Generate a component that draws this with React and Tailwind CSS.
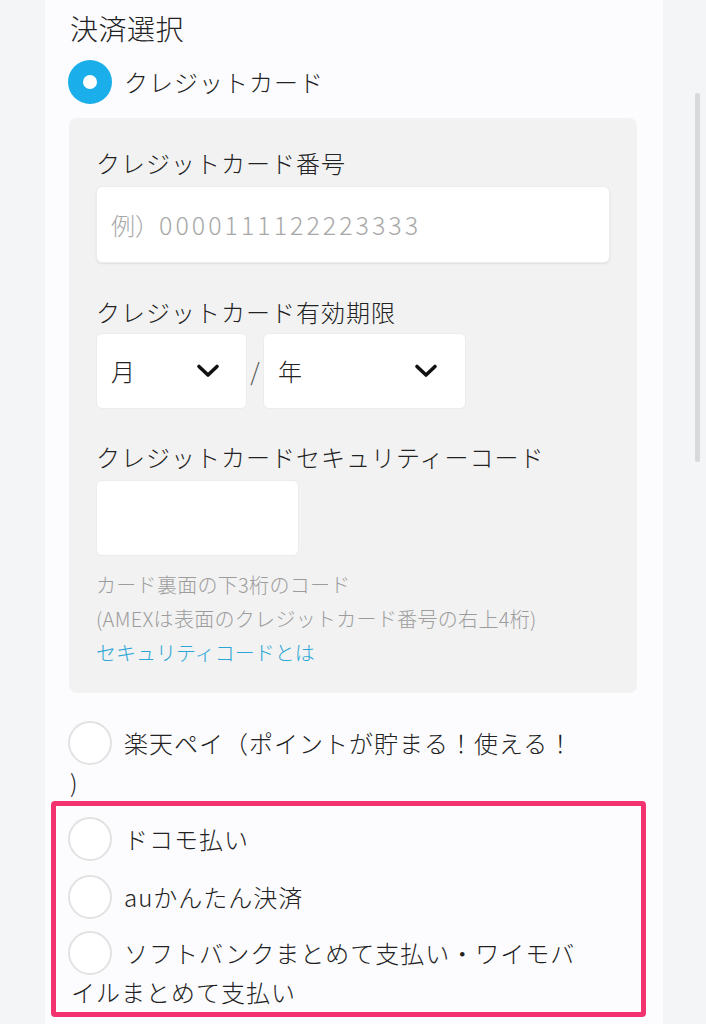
import React from "react";

const font = { fontFamily: '"Noto Sans CJK JP", "Noto Sans", sans-serif' };

function Chevron() {
  return (
    <svg width="24" height="16" viewBox="0 0 24 16" className="shrink-0">
      <path d="M3 3.5 L12 12 L21 3.5" fill="none" stroke="#111" strokeWidth="3.6" strokeLinecap="round" strokeLinejoin="round" />
    </svg>
  );
}

function EmptyRadio() {
  return (
    <span className="inline-block align-middle w-[44px] h-[44px] rounded-full bg-white border-2 border-[#e2e2e2] mr-[12px]" />
  );
}

export default function App() {
  return (
    <div className="relative w-[706px] min-h-[1024px] bg-[#f4f5f7] overflow-hidden font-light" style={font}>
      <div className="ml-[45px] w-[618px] min-h-[1024px] bg-[#fcfcfe] pl-[24px] pr-[26px] pt-[8px] text-[#222]">
        <div className="text-[28px] leading-[40px] pl-[1px] tracking-[0.5px]">決済選択</div>

        <div className="mt-[12px] flex items-center h-[44px] -ml-[1px]">
          <span className="w-[44px] h-[44px] rounded-full bg-[#1aaeea] flex items-center justify-center">
            <span className="w-[14px] h-[14px] rounded-full bg-white" />
          </span>
          <span className="ml-[12px] text-[24px] leading-[36px] tracking-[1px]">クレジットカード</span>
        </div>

        <div className="mt-[14px] bg-[#f2f2f2] rounded-[8px] pl-[27px] pr-[27px] pt-[27px] pb-[23px]">
          <div className="text-[24px] leading-[36px] tracking-[1px]">クレジットカード番号</div>
          <div className="mt-[5px] h-[77px] bg-white rounded-[6px] shadow-[0_1px_2px_rgba(0,0,0,0.08)] border border-[#ececec] flex items-center pl-[14px] text-[24px] text-[#a8a8a8]">
            <span>例）</span>
            <span className="text-[25px] tracking-[3px]">0000111122223333</span>
          </div>

          <div className="mt-[31px] text-[24px] leading-[36px] tracking-[1px]">クレジットカード有効期限</div>
          <div className="mt-[3px] flex items-center">
            <div className="w-[151px] h-[76px] bg-white rounded-[6px] border border-[#ececec] flex items-center justify-between pl-[14px] pr-[26px] text-[24px]">
              <span>月</span>
              <Chevron />
            </div>
            <span className="w-[16px] text-center text-[24px] text-[#555]">/</span>
            <div className="w-[203px] h-[76px] bg-white rounded-[6px] border border-[#ececec] flex items-center justify-between pl-[14px] pr-[27px] text-[24px]">
              <span>年</span>
              <Chevron />
            </div>
          </div>

          <div className="mt-[30px] text-[24px] leading-[36px] tracking-[1px]">クレジットカードセキュリティーコード</div>
          <div className="mt-[5px] w-[203px] h-[76px] bg-white rounded-[6px] border border-[#ececec]" />

          <div className="mt-[12px] text-[20px] leading-[34px] text-[#9c9c9c] tracking-[0.3px]">
            <div>カード裏面の下3桁のコード</div>
            <div>(AMEXは表面のクレジットカード番号の右上4桁)</div>
            <div className="text-[#2aa6d6] tracking-normal">セキュリティコードとは</div>
          </div>
        </div>

        <div className="mt-[28px] text-[24px] leading-[34px] -ml-[1px] tracking-[1px]">
          <EmptyRadio />
          <span className="align-middle">楽天ペイ（ポイントが貯まる！使える！</span>
          <br />
          <span className="pl-[2px]">)</span>
        </div>

        <div className="mt-[2px] -ml-[18px] -mr-[9px] border-[5px] border-[#f2336f] rounded-[4px] pl-[12px] pt-[11px] pb-[3px] text-[24px] leading-[34px] tracking-[1px]">
          <div>
            <EmptyRadio />
            <span className="align-middle">ドコモ払い</span>
          </div>
          <div className="mt-[14px]">
            <EmptyRadio />
            <span className="align-middle">auかんたん決済</span>
          </div>
          <div className="mt-[12px]">
            <EmptyRadio />
            <span className="align-middle">ソフトバンクまとめて支払い・ワイモバ</span>
            <br />
            <span className="pl-[3px]">イルまとめて支払い</span>
          </div>
        </div>
      </div>

      <div className="absolute left-[695px] top-[93px] w-[5px] h-[369px] rounded-full bg-[#d9d9d9]" />
    </div>
  );
}
